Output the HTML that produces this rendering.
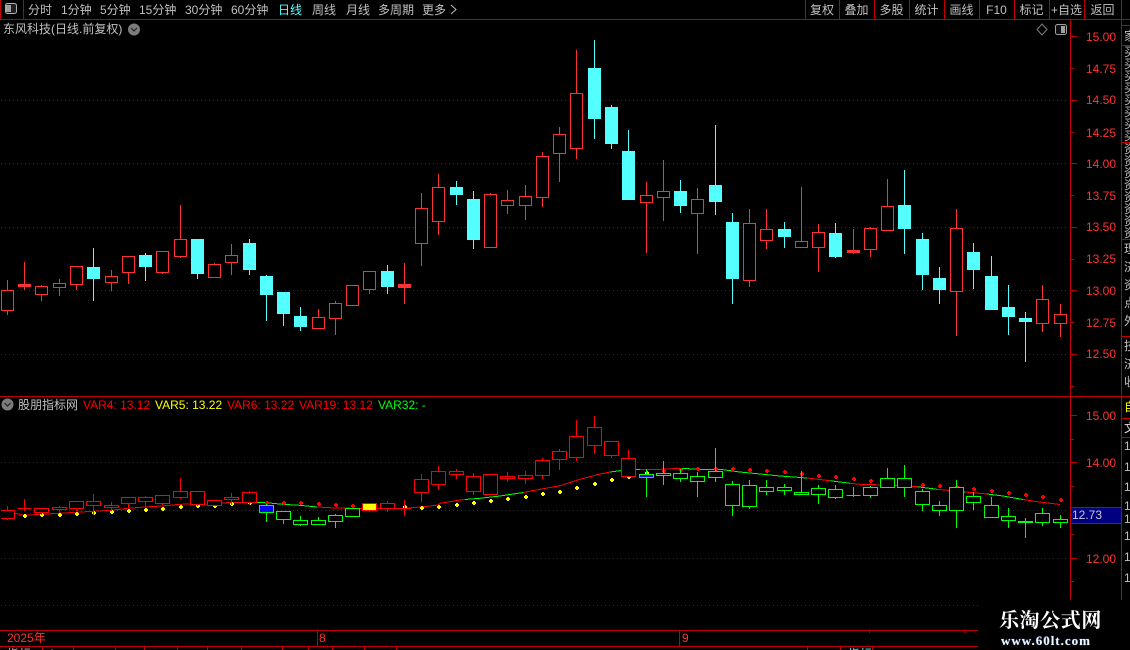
<!DOCTYPE html>
<html><head><meta charset="utf-8"><style>
html,body{margin:0;padding:0;background:#000;}
#r{position:relative;width:1130px;height:650px;overflow:hidden;background:#000;font-family:"Liberation Sans","WenQuanYi Zen Hei","Noto Sans CJK SC",sans-serif;font-size:12px;color:#c0c0c0;}
#r svg{position:absolute;left:0;top:0;}
.t{position:absolute;white-space:nowrap;line-height:14px;height:14px;}
.c{text-align:center;}
.a{color:#ff3232;left:1086px;}
.s{position:absolute;left:1124px;width:6px;overflow:hidden;line-height:18px;white-space:normal;word-break:break-all;}
.s span{display:block;width:12px;}
</style></head><body><div id="r">
<svg id="g" width="1130" height="650" viewBox="0 0 1130 650" shape-rendering="crispEdges"></svg>

<span class="t" style="left:28px;top:3px">分时</span>
<span class="t" style="left:61px;top:3px">1分钟</span>
<span class="t" style="left:100px;top:3px">5分钟</span>
<span class="t" style="left:139px;top:3px">15分钟</span>
<span class="t" style="left:185px;top:3px">30分钟</span>
<span class="t" style="left:231px;top:3px">60分钟</span>
<span class="t" style="left:278px;top:3px;color:#54ffff">日线</span>
<span class="t" style="left:312px;top:3px">周线</span>
<span class="t" style="left:346px;top:3px">月线</span>
<span class="t" style="left:378px;top:3px">多周期</span>
<span class="t" style="left:422px;top:3px">更多</span>

<span class="t c" style="left:805px;width:34px;top:3px">复权</span>
<span class="t c" style="left:839px;width:35px;top:3px">叠加</span>
<span class="t c" style="left:874px;width:35px;top:3px">多股</span>
<span class="t c" style="left:909px;width:35px;top:3px">统计</span>
<span class="t c" style="left:944px;width:35px;top:3px">画线</span>
<span class="t c" style="left:979px;width:35px;top:3px">F10</span>
<span class="t c" style="left:1014px;width:35px;top:3px">标记</span>
<span class="t c" style="left:1049px;width:35px;top:3px">+自选</span>
<span class="t c" style="left:1084px;width:37px;top:3px">返回</span>

<span class="t" style="left:3px;top:22px">东风科技(日线.前复权)</span>

<span class="t a" style="top:30px">15.00</span>
<span class="t a" style="top:62px">14.75</span>
<span class="t a" style="top:93px">14.50</span>
<span class="t a" style="top:126px">14.25</span>
<span class="t a" style="top:157px">14.00</span>
<span class="t a" style="top:189px">13.75</span>
<span class="t a" style="top:220px">13.50</span>
<span class="t a" style="top:252px">13.25</span>
<span class="t a" style="top:284px">13.00</span>
<span class="t a" style="top:316px">12.75</span>
<span class="t a" style="top:347px">12.50</span>

<span class="t" style="left:18px;top:398px">股朋指标网</span>
<span class="t" style="left:83px;top:398px;color:#ff0000">VAR4: 13.12</span>
<span class="t" style="left:155px;top:398px;color:#ffff00">VAR5: 13.22</span>
<span class="t" style="left:227px;top:398px;color:#ff0000">VAR6: 13.22</span>
<span class="t" style="left:299px;top:398px;color:#ff0000">VAR19: 13.12</span>
<span class="t" style="left:378px;top:398px;color:#00ff00">VAR32: -</span>

<span class="t a" style="top:409px">15.00</span>
<span class="t a" style="top:456px">14.00</span>
<span class="t a" style="top:552px">12.00</span>
<div style="position:absolute;left:1071px;top:507px;width:50px;height:15px;background:#000080;border-top:1px solid #c00000;border-bottom:1px solid #c00000"></div>
<span class="t" style="left:1072px;top:508px;color:#c8c8c8">12.73</span>

<span class="t" style="left:7px;top:631px;color:#ff3232">2025年</span>
<span class="t" style="left:319px;top:631px;color:#ff3232">8</span>
<span class="t" style="left:682px;top:631px;color:#ff3232">9</span>

<span class="t" style="left:7px;top:647px">指标</span>
<span class="t" style="left:48px;top:647px">A</span>
<span class="t" style="left:848px;top:647px;color:#54ffff">指标</span>

<div class="s" style="top:27px;height:18px"><span>家</span></div>
<div class="s" style="top:46px;height:96px;line-height:12px"><span>买买买买买买买买</span></div>
<div class="s" style="top:143px;height:96px;line-height:12px"><span>资资资资资资资资</span></div>
<div class="s" style="top:240px;height:96px"><span>理济资点外</span></div>
<div class="s" style="top:337px;height:59px"><span>技济收</span></div>
<div class="s" style="top:398px;height:20px;color:#ffff00"><span>自</span></div>
<div class="s" style="top:419px;height:18px;color:#e0e0e0"><span>文</span></div>
<span class="t" style="left:1124px;top:439px;width:6px;overflow:hidden">1</span>
<span class="t" style="left:1124px;top:460px;width:6px;overflow:hidden">1</span>
<span class="t" style="left:1124px;top:480px;width:6px;overflow:hidden">1</span>
<span class="t" style="left:1124px;top:499px;width:6px;overflow:hidden">1</span>
<span class="t" style="left:1124px;top:512px;width:6px;overflow:hidden">1</span>
<span class="t" style="left:1124px;top:529px;width:6px;overflow:hidden">1</span>
<span class="t" style="left:1124px;top:550px;width:6px;overflow:hidden">1</span>
<span class="t" style="left:1124px;top:571px;width:6px;overflow:hidden">1</span>

<div style="position:absolute;left:978px;top:600px;width:152px;height:50px;background:#000"></div>
<span class="t" style="left:999px;top:608px;height:22px;line-height:22px;font-size:20px;font-weight:bold;letter-spacing:.6px;color:#fff;font-family:'Noto Serif CJK SC',serif">乐淘公式网</span>
<span class="t" style="left:1001px;top:633px;line-height:15px;font-size:13px;font-weight:bold;letter-spacing:1px;color:#eef6ff;font-family:'Liberation Serif',serif;text-shadow:0 0 1px #5a8cd0">www.60lt.com</span>

<script>
(function(){
var R='#ff3232',C='#54ffff',LR='#ff0000',LG='#00ff00',B='#c00000',D='#a00000';
var d=[
[7,280,290,310,314,0],[24,262,284,286,289,2],[41,285,286,294,300,0],[59,279,283,287,295,0],[76,266,266,284,289,0],[93,248,267,278,300,1],
[111,270,276,282,290,0],[128,256,256,272,283,0],[145,253,255,266,280,1],[162,251,251,272,273,0],[180,205,239,256,257,0],[197,239,239,273,278,1],
[214,263,264,277,277,0],[231,244,255,262,274,0],[249,239,243,269,274,1],[266,275,276,294,320,1],[283,292,292,313,325,1],[300,307,316,326,330,1],
[318,309,317,328,328,0],[335,301,303,318,334,0],[352,285,285,305,305,0],[369,271,271,289,293,0],[387,265,271,286,293,1],[404,263,284,287,303,2],
[421,193,208,243,265,0],[438,174,187,221,234,0],[456,181,187,194,204,1],[473,191,199,239,248,1],[490,193,194,247,247,0],[507,190,200,205,213,0],
[525,185,196,205,219,0],[542,152,156,197,206,0],[559,127,134,153,181,0],[576,50,93,148,158,0],[594,40,68,118,138,1],[611,105,107,143,148,1],
[628,130,151,199,199,1],[646,182,195,202,252,0],[663,160,191,197,220,0],[680,180,191,205,212,1],[697,188,199,213,253,0],[715,125,185,201,214,1],
[732,213,222,278,303,1],[749,209,223,280,286,0],[766,209,229,240,248,0],[784,222,229,236,247,1],[801,187,241,247,247,0],[818,224,232,247,271,0],
[835,223,233,256,257,1],[853,229,250,252,253,2],[870,227,228,249,256,0],[887,179,206,230,230,0],[904,170,205,228,253,1],[922,233,239,274,289,1],
[939,267,278,289,303,1],[956,209,228,291,335,0],[973,243,252,269,288,1],[991,256,276,309,309,1],[1008,285,307,316,334,1],[1025,312,318,321,361,1],
[1042,285,299,323,331,0],[1060,304,314,323,336,0]];
var s='';
function ln(x1,y1,x2,y2,c){return '<line x1="'+x1+'" y1="'+y1+'" x2="'+x2+'" y2="'+y2+'" stroke="'+c+'" stroke-width="1"/>';}
function dot(y,x2){return '<line x1="1" y1="'+y+'.5" x2="'+x2+'" y2="'+y+'.5" stroke="'+D+'" stroke-width="1" stroke-dasharray="1 3"/>';}
[100,163,227,290,354].forEach(function(y){s+=dot(y,1068);});
[462,510,558].forEach(function(y){s+=dot(y,1068);});
s+=dot(605,978);
// frame
s+=ln(0,19.5,1130,19.5,B)+ln(0,396.5,1130,396.5,B);
s+=ln(0.5,0,0.5,19,B)+ln(23.5,0,23.5,19,B);
[805,839,874,909,944,979,1014,1049,1084,1121].forEach(function(x){s+=ln(x+.5,0,x+.5,19,B);});
s+=ln(1070.5,19,1070.5,600,B)+ln(1121.5,0,1121.5,600,B);
[25,45,142,239,336,418,437].forEach(function(y){s+=ln(1122,y+.5,1130,y+.5,B);});
[36,100,163,227,290,354,415,462,510,558].forEach(function(y){s+=ln(1071,y+.5,1077,y+.5,B);});
[68,132,195,259,322,386,439,486,534,581].forEach(function(y){s+=ln(1071,y+.5,1074,y+.5,B);});
s+=ln(0,630.5,978,630.5,B)+ln(0,646.5,978,646.5,B);
s+=ln(317.5,630,317.5,646,B)+ln(679.5,630,679.5,646,B);
s+=ln(869.5,630,869.5,633,B)+ln(964.5,630,964.5,633,B);
[42,73,115,144,177,207,241,282,308,332,364,396,807,840,872].forEach(function(x){s+=ln(x+.5,647,x+.5,650,B);});
// main candles
d.forEach(function(k){
 var x=k[0]+.5,c=k[5]==1?C:R;
 s+=ln(x,k[1],x,k[4]+1,c);
 if(k[5]==1||k[5]==2){s+='<rect x="'+(k[0]-6)+'" y="'+k[2]+'" width="13" height="'+(k[3]-k[2]+1)+'" fill="'+c+'"/>';}
 else{s+='<rect x="'+(k[0]-5.5)+'" y="'+(k[2]+.5)+'" width="12" height="'+(k[3]-k[2])+'" fill="#000" stroke="'+c+'" stroke-width="1"/>';}
});
// lower line
var p=[[1,510],[24,515.3],[41,514.3],[59,513.3],[76,512.3],[93,511.3],[111,510.3],[128,508.3],[145,507],[162,506],[180,504.3],[197,504],[214,504],[231,502.3],[249,502.3],[257,502.3],[266,502.7],[283,504.3],[300,505.3],[317,507],[335,508],[352,508.3],[369,508.3],[387,508.3],[404,508.3],[421,507],[438,505],[440,503.3],[460,500],[465,499.5],[480,498.3],[500,496],[523,492.5],[540,489.3],[560,485.7],[580,479.3],[600,474],[610,472],[620,470.7],[640,469.3],[660,469.3],[680,468.3],[700,469.3],[720,469.3],[740,472],[760,474],[780,476],[807,478],[830,480.7],[850,483.3],[862,484.5],[890,485],[917,486.7],[937,489.3],[950,490.5],[965,492],[987,494],[1003,496],[1023,499.5],[1037,501.7],[1060,504.5]];
var gz=[[257,317],[465,523],[610,640],[680,807],[830,850],[920,937],[950,965],[990,1023]];
function col(x){for(var i=0;i<gz.length;i++){if(x>=gz[i][0]&&x<gz[i][1])return LG;}return LR;}
for(var i=0;i<p.length-1;i++){
 s+='<line x1="'+p[i][0]+'" y1="'+p[i][1]+'" x2="'+p[i+1][0]+'" y2="'+p[i+1][1]+'" stroke="'+col((p[i][0]+p[i+1][0])/2)+'" stroke-width="1"/>';
}
// dots
function plus(x,y,c){y=Math.round(y);return '<rect x="'+x+'" y="'+(y-2)+'" width="2" height="4" fill="'+c+'"/><rect x="'+(x-1)+'" y="'+(y-1)+'" width="4" height="2" fill="'+c+'"/>';}
var yd=[[24,516],[41,515],[59,515],[76,514],[93,513],[111,512],[128,511],[145,510],[162,508.7],[180,507],[197,506],[214,506],[231,504],[249,503],[404,507.3],[421,508],[438,507],[456,505],[473,503],[490,501],[507,499],[525,497],[542,494],[559,492],[576,488],[594,484],[611,480],[628,477],[646,472.7]];
var rd=[[266,502.7],[283,502.7],[300,502.7],[318,504],[335,505],[352,506],[663,470.7],[680,470],[697,469],[715,469],[732,469],[749,470],[766,471],[784,472],[801,474],[818,476],[835,477],[853,479],[870,481],[887,483],[904,484],[922,485],[939,486],[956,487],[973,489],[991,491],[1008,493],[1025,494.7],[1042,497],[1060,499.7]];
yd.forEach(function(q){s+=plus(q[0],q[1],'#ffff00');});
rd.forEach(function(q){s+=plus(q[0],q[1],'#ff0000');});
// lower candles
function m(y){return Math.round(415+(y-37)*0.3755);}
d.forEach(function(k,i){
 var x=k[0]+.5,col2=(i<15)?LR:(i<21?LG:(i<37?LR:LG)),fill='#000';
 if(i==15||i==37)fill='#0000ff';
 if(i==21){col2=LR;fill='#ffff00';}
 var a=m(k[1]),b=m(k[2]),c=m(k[3]),e=m(k[4]);
 s+=ln(x,a,x,e+1,col2);
 if(k[5]==2){
  s+=ln(k[0]-6.5,b+.5,k[0]+7.5,b+.5,col2);
 }else if(i==0){
  s+='<rect x="1" y="'+(b+1)+'" width="14" height="'+(c-b-1)+'" fill="#000"/>';
  s+=ln(1,b+.5,15,b+.5,col2)+ln(1,c+.5,15,c+.5,col2)+ln(14.5,b,14.5,c+1,col2);
 }else{
  s+='<rect x="'+(k[0]-6.5)+'" y="'+(b+.5)+'" width="14" height="'+Math.max(c-b,1)+'" fill="'+fill+'" stroke="'+(fill=='#0000ff'?LG:col2)+'" stroke-width="1"/>';
 }
});
// icons
s+='<g shape-rendering="auto">';
s+='<rect x="5.5" y="3.5" width="11" height="10" rx="2" fill="#202020" stroke="#b0b0b0"/><rect x="6" y="5" width="5" height="7" fill="#a0a0a0"/>';
s+='<rect x="1055.5" y="24.5" width="11" height="10" rx="2" fill="#101010" stroke="#a0a0a0"/><rect x="1061" y="26" width="4" height="7" fill="#a0a0a0"/>';
s+='<path d="M1042 24 L1047 29.5 L1042 35 L1037 29.5 Z" fill="none" stroke="#808080"/>';
s+='<circle cx="134" cy="29.5" r="6" fill="#7c7c7c"/><path d="M131 28 L134 31 L137 28" fill="none" stroke="#222" stroke-width="1.2"/>';
s+='<circle cx="7.5" cy="404.5" r="6" fill="#7c7c7c"/><path d="M4.5 403 L7.5 406 L10.5 403" fill="none" stroke="#222" stroke-width="1.2"/>';
s+='<path d="M451 5 L456 9.5 L451 14" fill="none" stroke="#c0c0c0"/>';
s+='</g>';
document.getElementById('g').innerHTML=s;
})();
</script>
</div></body></html>
